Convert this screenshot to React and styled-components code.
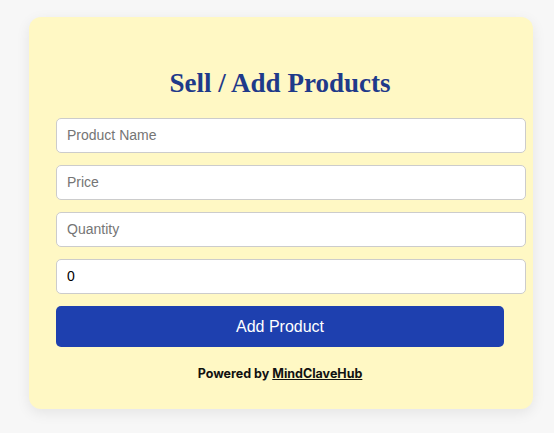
import React from "react";
import styled, { createGlobalStyle } from "styled-components";

const Global = createGlobalStyle`
  html, body {
    margin: 0;
    padding: 0;
    background: #f7f7f7;
    font-family: "Liberation Sans", Arial, sans-serif;
  }
`;

const Page = styled.div`
  padding: 17px 0 24px 29px;
`;

const Card = styled.div`
  box-sizing: border-box;
  width: 504px;
  height: 392px;
  padding: 48px 29px 0 27px;
  background: #fff8c4;
  border-radius: 12px;
  box-shadow: 0 4px 14px rgba(0, 0, 0, 0.08);
`;

const Title = styled.h2`
  margin: 0 0 17px;
  text-align: center;
  font-family: "Liberation Serif", "Times New Roman", serif;
  font-weight: 700;
  font-size: 27px;
  line-height: 36px;
  color: #1f3a8a;
`;

const Form = styled.form`
  display: flex;
  flex-direction: column;
  align-items: flex-start;
  gap: 12px;
`;

const Input = styled.input`
  width: 448px;
  padding: 9px 10px;
  border: 1px solid #cccccc;
  border-radius: 5px;
  background: #ffffff;
  font-family: "Liberation Sans", Arial, sans-serif;
  font-size: 14px;
  line-height: 15px;
  color: #000;
  outline: none;
  &::placeholder {
    color: #757575;
  }
`;

const Button = styled.button`
  box-sizing: border-box;
  width: 448px;
  height: 41px;
  border: none;
  border-radius: 5px;
  background: #1e40af;
  color: #ffffff;
  font-family: "Liberation Sans", Arial, sans-serif;
  font-size: 16px;
  cursor: pointer;
`;

const Footer = styled.p`
  margin: 19px 0 0;
  width: 448px;
  text-align: center;
  font-family: Inter, "Liberation Sans", sans-serif;
  font-weight: 700;
  font-size: 12.5px;
  color: #111111;
`;

const Link = styled.a`
  color: #111111;
  text-decoration: underline;
`;

export default function App() {
  return (
    <>
      <Global />
      <Page>
        <Card>
          <Title>Sell / Add Products</Title>
          <Form onSubmit={(e) => e.preventDefault()}>
            <Input type="text" placeholder="Product Name" />
            <Input type="text" placeholder="Price" />
            <Input type="text" placeholder="Quantity" />
            <Input type="text" defaultValue="0" />
            <Button type="submit">Add Product</Button>
          </Form>
          <Footer>
            Powered by <Link href="#">MindClaveHub</Link>
          </Footer>
        </Card>
      </Page>
    </>
  );
}
